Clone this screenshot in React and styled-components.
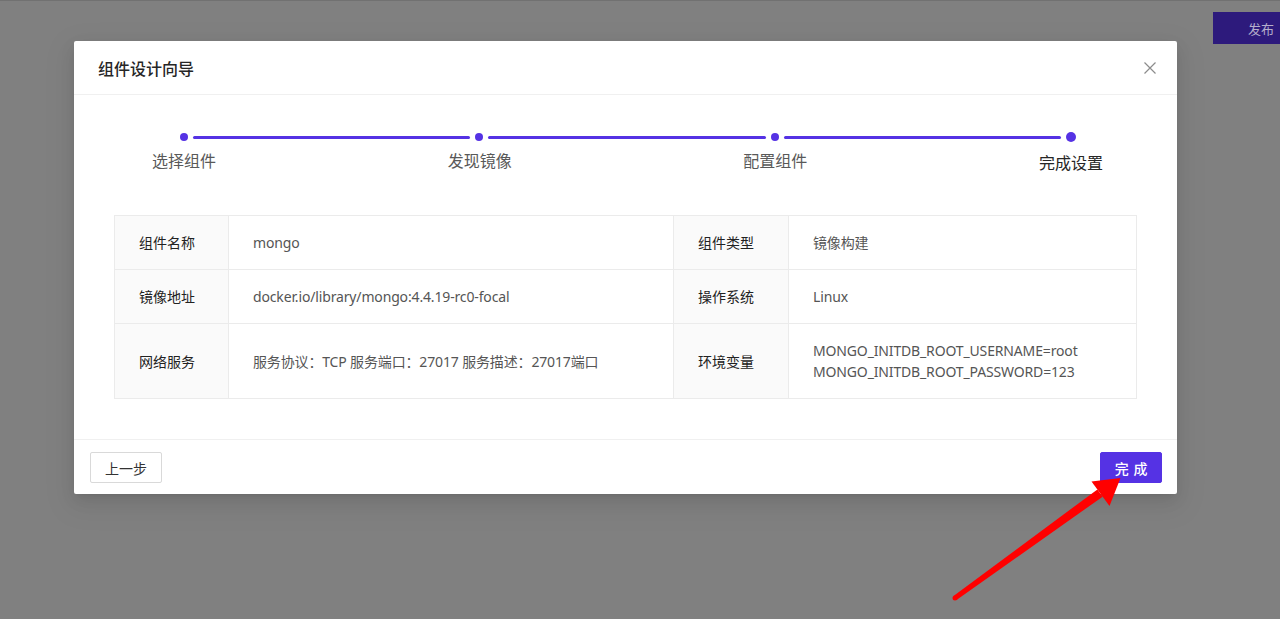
import styled, { createGlobalStyle } from "styled-components";

const steps = ["选择组件", "发现镜像", "配置组件", "完成设置"];

const rows = [
  ["组件名称", ["mongo"], "组件类型", ["镜像构建"]],
  ["镜像地址", ["docker.io/library/mongo:4.4.19-rc0-focal"], "操作系统", ["Linux"]],
  [
    "网络服务",
    ["服务协议：TCP 服务端口：27017 服务描述：27017端口"],
    "环境变量",
    ["MONGO_INITDB_ROOT_USERNAME=root", "MONGO_INITDB_ROOT_PASSWORD=123"],
  ],
];

export default function App() {
  return (
    <>
      <GlobalStyle />
      <Backdrop>
        <Modal>
          <Header>
            <Title>组件设计向导</Title>
            <Close aria-label="close">
              <svg width="12" height="12" viewBox="0 0 12 12">
                <path d="M0.5 0.5 L11.5 11.5 M11.5 0.5 L0.5 11.5" stroke="#8c8c8c" strokeWidth="1.2" fill="none" />
              </svg>
            </Close>
          </Header>

          <Body>
            {/* Steps */}
            <Steps>
              <Track>
                {steps.map((s, i) => (
                  <Segment key={s} last={i === steps.length - 1}>
                    <Dot last={i === steps.length - 1} />
                    {i < steps.length - 1 && <Line />}
                  </Segment>
                ))}
              </Track>
              <Labels>
                {steps.map((s, i) => (
                  <Label key={s} active={i === steps.length - 1}>
                    <span>{s}</span>
                  </Label>
                ))}
              </Labels>
            </Steps>

            {/* Summary table */}
            <Table>
              {rows.map((r) => (
                <Row key={r[0]}>
                  <KeyCell>{r[0]}</KeyCell>
                  <ValueCell>
                    {r[1].map((t) => (
                      <div key={t}>{t}</div>
                    ))}
                  </ValueCell>
                  <KeyCell>{r[2]}</KeyCell>
                  <ValueCell>
                    {r[3].map((t) => (
                      <div key={t}>{t}</div>
                    ))}
                  </ValueCell>
                </Row>
              ))}
            </Table>
          </Body>

          <Footer>
            <Button>上一步</Button>
            <PrimaryButton>
              <span>完成</span>
            </PrimaryButton>
          </Footer>
        </Modal>

        <Publish>发布</Publish>

        <Arrow width="1280" height="619" viewBox="0 0 1280 619">
          <polygon points="956.5,599 953.5,595 1097.4,488.4 1102.6,495.7" fill="#ff0000" />
          <polygon points="1120.5,477 1091.5,480.5 1109.5,505" fill="#ff0000" />
          <circle cx="955" cy="597" r="2.5" fill="#ff0000" />
        </Arrow>
      </Backdrop>
    </>
  );
}

/* Styled Components */

const GlobalStyle = createGlobalStyle`
  html, body {
    margin: 0;
    padding: 0;
    background: #808080;
  }
  body {
    font-family: "Noto Sans", "Noto Sans CJK SC", sans-serif;
    font-size: 14px;
    color: #333;
  }
`;

const Backdrop = styled.div`
  position: relative;
  display: flex;
  align-items: flex-start;
  width: 1280px;
  height: 619px;
  overflow: hidden;
  background: #808080;
  border-top: 1px solid #717171;
  box-sizing: border-box;
`;

const Modal = styled.div`
  flex-shrink: 0;
  width: 1103px;
  margin: 40px 0 0 74px;
  background: #fff;
  border-radius: 2px;
  box-shadow: 0 3px 6px -4px rgba(0, 0, 0, 0.12), 0 6px 16px 0 rgba(0, 0, 0, 0.08),
    0 9px 28px 8px rgba(0, 0, 0, 0.05);
`;

const Header = styled.div`
  display: flex;
  align-items: center;
  justify-content: space-between;
  height: 53px;
  padding: 0 17px 0 24px;
  border-bottom: 1px solid #f0f0f0;
`;

const Title = styled.div`
  font-family: "Noto Sans CJK SC", sans-serif;
  font-size: 16px;
  font-weight: 500;
  color: #262626;
`;

const Close = styled.button`
  display: flex;
  align-items: center;
  justify-content: center;
  width: 20px;
  height: 20px;
  padding: 0;
  border: none;
  background: none;
  cursor: pointer;
`;

const Body = styled.div`
  padding: 37px 40px 40px;
`;

const Steps = styled.div`
  margin: 0 61px 0 66px;
`;

const Track = styled.div`
  display: flex;
  align-items: center;
  height: 10px;
`;

const Segment = styled.div`
  display: flex;
  align-items: center;
  flex: ${(p) => (p.last ? "0 0 auto" : "1")};
`;

const Dot = styled.span`
  flex-shrink: 0;
  width: ${(p) => (p.last ? "10px" : "8px")};
  height: ${(p) => (p.last ? "10px" : "8px")};
  border-radius: 50%;
  background: #5532e4;
`;

const Line = styled.span`
  flex: 1;
  height: 3px;
  margin: 0 5px;
  border-radius: 2px;
  background: #5532e4;
`;

const Labels = styled.div`
  display: flex;
  justify-content: space-between;
  height: 24px;
  padding: 0 5px 0 4px;
  margin-top: 6px;
`;

const Label = styled.div`
  display: flex;
  justify-content: center;
  width: 0;
  height: 24px;
  white-space: nowrap;
  font-family: "Noto Sans CJK SC", sans-serif;
  font-size: 16px;
  line-height: 24px;
  margin-top: ${(p) => (p.active ? "2px" : "0")};
  color: ${(p) => (p.active ? "#262626" : "#595959")};
`;

const Table = styled.div`
  margin-top: 43px;
  border: 1px solid #ebebeb;
  border-bottom: none;
`;

const Row = styled.div`
  display: grid;
  grid-template-columns: 114px 445px 115px 1fr;
  border-bottom: 1px solid #ebebeb;
`;

const KeyCell = styled.div`
  display: flex;
  align-items: center;
  padding: 16px 24px;
  background: #fafafa;
  border-right: 1px solid #ebebeb;
  line-height: 21px;
  color: #222;
  font-family: "Noto Sans CJK SC", sans-serif;
`;

const ValueCell = styled.div`
  display: flex;
  flex-direction: column;
  justify-content: center;
  padding: 16px 24px;
  line-height: 21px;
  color: #555;
  letter-spacing: -0.15px;
  border-right: 1px solid #ebebeb;

  &:last-child {
    border-right: none;
  }
`;

const Footer = styled.div`
  display: flex;
  align-items: center;
  justify-content: space-between;
  padding: 12px 15px 11px 16px;
  border-top: 1px solid #f0f0f0;
`;

const Button = styled.button`
  height: 31px;
  padding: 0 14px;
  border: 1px solid #d9d9d9;
  border-radius: 2px;
  background: #fff;
  color: #333;
  font-family: "Noto Sans CJK SC", sans-serif;
  font-size: 14px;
  white-space: nowrap;
  cursor: pointer;
`;

const PrimaryButton = styled(Button)`
  padding: 0 13.5px;
  border-color: #5532e4;
  background: #5532e4;
  color: #fff;
  font-weight: 500;

  span {
    letter-spacing: 0.34em;
    margin-right: -0.34em;
  }
`;

const Publish = styled.div`
  flex-shrink: 0;
  display: flex;
  align-items: center;
  width: 80px;
  height: 32px;
  margin: 11px 0 0 36px;
  padding-left: 35px;
  background: #2d1a7c;
  color: #b4aecb;
  font-family: "Noto Sans CJK SC", sans-serif;
  font-size: 13px;
`;

const Arrow = styled.svg`
  position: absolute;
  left: 0;
  top: 0;
  pointer-events: none;
`;
